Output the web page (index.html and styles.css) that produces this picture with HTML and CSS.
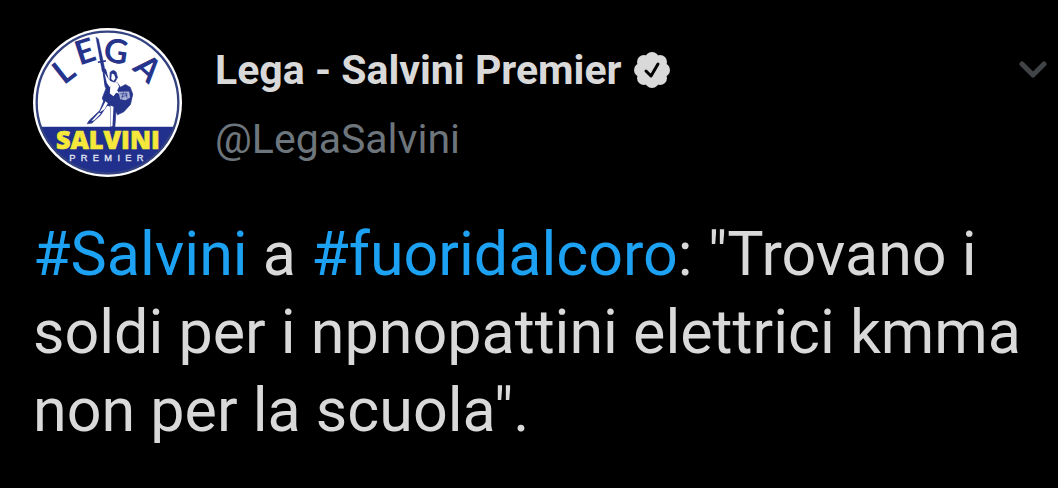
FILE: index.html
```html
<!DOCTYPE html>
<html lang="it">
<head>
    <meta charset="UTF-8">
    <meta name="viewport" content="width=device-width, initial-scale=1.0">
    <title>Lega - Salvini Premier</title>
    <link rel="stylesheet" href="styles.css">
</head>
<body>
    <article class="tweet">
        <header class="tweet-header">
            <svg class="avatar" viewBox="15 17 448 448" role="img" aria-label="Lega Salvini Premier">
                <defs>
                    <clipPath id="disc"><circle cx="239" cy="241" r="216"/></clipPath>
                </defs>
                <circle cx="239" cy="241" r="224" fill="#fff"/>
                <rect x="15" y="314" width="448" height="160" fill="#20308c" clip-path="url(#disc)"/>
                <circle cx="239" cy="241" r="213" fill="none" stroke="#34427f" stroke-width="7"/>
                <text class="logo-lega" x="108 155 224 311" y="190 130 117 141" rotate="-38 -18 8 42">LEGA</text>
                <!-- Warrior with sword and shield -->
                <g fill="#26348b" stroke="#26348b" stroke-linejoin="round">
                    <path d="M204 44l8 6 20 95-9 3z"/>
                    <path d="M210 120l24-4" stroke-width="5"/>
                    <path d="M225 143l8-2 10 38 8 12-8 22-11-20z" stroke-width="3"/>
                    <path d="M247 150q10-10 18 0l4 16-8 14-15-5z" stroke-width="2"/>
                    <path d="M236 195l32-14 10 14 15-8 14 8 8 21-7 31-20 22-19 9-10-22-26-8-10-20z" stroke-width="2"/>
                    <path d="M231 228l-15 37-32 30-6 10 14-2 26-24 19-28 11-4v69l6 2 7-2 5-70z" stroke-width="2"/>
                </g>
                <g fill="#fff">
                    <path d="M230 152l7 30 9 13 7-12-9-10z"/>
                    <path d="M252 154l7 3 4 11-6 8-7-6z"/>
                    <path d="M248 184l20-4 6 13-6 12 7 10-10-3-8 10-11-8z"/>
                    <path d="M233 237l7 6-10 18-15 10 8-14z"/>
                    <path d="M213 272l6 2-20 20-9 3z"/>
                    <path d="M248 250l9 4-3 58-6 2z"/>
                </g>
                <path d="M272 209l32-1 3 18-14 8-16-3z" fill="#a9b0d5"/>
                <path d="M277 215h22M281 224l18-5M287 210l-5 19M294 211l4 17" fill="none" stroke="#26348b" stroke-width="2"/>
                <text class="logo-salvini" x="240" y="382">SALVINI</text>
                <text class="logo-premier" x="124" y="416">PREMIER</text>
            </svg>
            <div class="author">
                <div class="name-row">
                    <span class="name">Lega - Salvini Premier</span>
                    <svg class="verified" viewBox="0 0 36 36" role="img" aria-label="Account verificato">
                        <g fill="#d9d9d9">
                            <circle cx="18" cy="18" r="13"/>
                            <circle cx="18" cy="7" r="7"/>
                            <circle cx="26" cy="10" r="7"/>
                            <circle cx="29" cy="18" r="7"/>
                            <circle cx="26" cy="26" r="7"/>
                            <circle cx="18" cy="29" r="7"/>
                            <circle cx="10" cy="26" r="7"/>
                            <circle cx="7" cy="18" r="7"/>
                            <circle cx="10" cy="10" r="7"/>
                        </g>
                        <path d="M12 19l5 5 7-12" fill="none" stroke="#000" stroke-width="3" stroke-linecap="round" stroke-linejoin="round"/>
                    </svg>
                </div>
                <a class="handle" href="#">@LegaSalvini</a>
            </div>
            <button class="menu" type="button" aria-label="Altro">
                <svg viewBox="0 0 28 18">
                    <path d="M3 3l11 11L25 3" fill="none" stroke="#414447" stroke-width="5" stroke-linecap="round" stroke-linejoin="round"/>
                </svg>
            </button>
        </header>
        <p class="tweet-text"><a href="#">#Salvini</a> a <a href="#">#fuoridalcoro</a>: "Trovano i soldi per i npnopattini elettrici kmma non per la scuola".</p>
    </article>
</body>
</html>
```
FILE: styles.css
```css
body {
    margin: 0;
    background-color: #000;
    color: #d9d9d9;
    font-family: Roboto, Arial, sans-serif;
}

a {
    color: #1da1f2;
    text-decoration: none;
}

.tweet {
    padding: 28px 11px 36px 33px;
}

.tweet-header {
    display: flex;
    align-items: flex-start;
}

.avatar {
    flex: none;
    width: 149px;
    height: 149px;
}

.logo-lega {
    font-family: Lato, sans-serif;
    font-size: 100px;
    font-weight: bold;
    fill: #26348b;
}

.logo-salvini {
    font-family: "Open Sans", sans-serif;
    font-size: 76px;
    font-weight: 800;
    text-anchor: middle;
    fill: #f5e83a;
    stroke: #f5e83a;
    stroke-width: 2px;
}

.logo-premier {
    font-family: "Liberation Sans", sans-serif;
    font-size: 28px;
    letter-spacing: 16px;
    fill: #e4e6f2;
    stroke: #e4e6f2;
    stroke-width: 1px;
}

.author {
    flex: 1;
    margin-left: 33px;
    padding-top: 8px;
}

.name-row {
    display: flex;
    align-items: center;
    gap: 12px;
    height: 68px;
}

.name {
    font-size: 41px;
    font-weight: bold;
}

.verified {
    width: 36px;
    height: 36px;
}

.handle {
    display: block;
    font-size: 41px;
    line-height: 70px;
    color: #6e767d;
}

.menu {
    margin-top: 33px;
    padding: 0;
    border: none;
    background: none;
    cursor: pointer;
}

.menu svg {
    display: block;
    width: 28px;
    height: 18px;
}

.tweet-text {
    margin: 38px 0 0;
    font-size: 61px;
    line-height: 78px;
}
```
